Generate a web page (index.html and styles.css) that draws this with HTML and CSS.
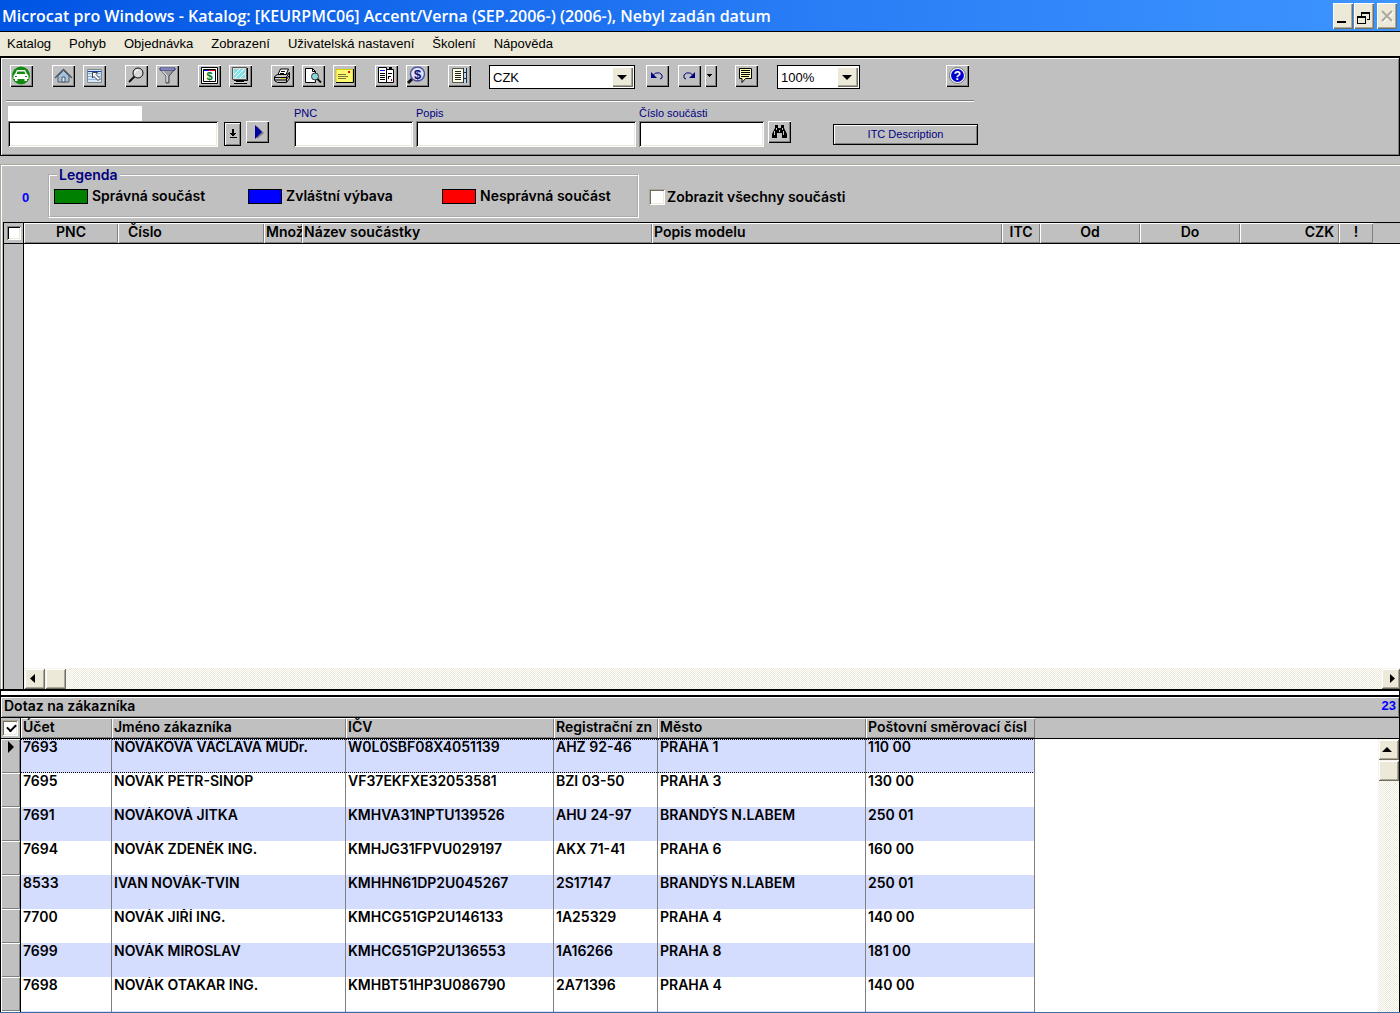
FILE: index.html
```html
<!DOCTYPE html>
<html lang="cs">
<head>
<meta charset="utf-8">
<title>Microcat pro Windows</title>
<link rel="stylesheet" href="styles.css">
</head>
<body>
<header class="titlebar">
  <h1>Microcat pro Windows - Katalog: [KEURPMC06] Accent/Verna (SEP.2006-) (2006-), Nebyl zadán datum</h1>
  <div class="window-buttons">
    <button type="button" aria-label="Minimalizovat"><svg width="20" height="26"><path d="M4 18h9v2H4z"/></svg></button>
    <button type="button" aria-label="Obnovit"><svg width="20" height="26"><path d="M7 9h9v2H7zM7 11h1v3H7zM15 11h1v6h-1zM13 16h3v1h-3zM3 13h9v2H3zM3 15h1v6H3zM11 15h1v6h-1zM3 20h9v1H3z"/></svg></button>
    <button type="button" class="close" aria-label="Zavřít" disabled><svg width="20" height="26"><path d="M6 9l10 10M16 9L6 19" stroke="#fff" stroke-width="2"/><path d="M5 8l10 10M15 8L5 18" stroke="#aca899" stroke-width="2"/></svg></button>
  </div>
</header>
<nav class="menu">
  <a href="#">Katalog</a><a href="#">Pohyb</a><a href="#">Objednávka</a><a href="#">Zobrazení</a><a href="#">Uživatelská nastavení</a><a href="#">Školení</a><a href="#">Nápověda</a>
</nav>

<section class="toolbar">
  <div class="tools">
    <div class="group">
      <button type="button" class="tool" aria-label="Vozidlo"><svg viewBox="0 0 23 22"><circle cx="11" cy="10.500" r="9" fill="#128a12"/><path d="M7 5h8l2 4 1.500 1.500V14h-1.500v2h-2.500v-2h-7v2H5v-2H3.500v-3.500L5 9z" fill="#fff"/><path d="M7.500 6.500h7l1 2.500h-9z" fill="#128a12"/><path d="M5 11h2v1H5zM15 11h2v1h-2z" fill="#128a12"/></svg></button>
    </div>
    <div class="group">
      <button type="button" class="tool" aria-label="Domů"><svg viewBox="0 0 23 22"><path d="M6 11l5.500-5.500L17 11v6H6z" fill="#a6c1dc" stroke="#4e5968"/><path d="M3 13l8.500-8.500L20 13" fill="none" stroke="#4e5968" stroke-width="1.500"/><path d="M10 12h3v5h-3z" fill="#dce8f2" stroke="#4e5968"/></svg></button>
      <button type="button" class="tool" aria-label="Výběr"><svg viewBox="0 0 23 22"><path d="M4 4h15v14H4z" fill="#d7e7f8"/><path d="M4 8.500h15M4 11.500h15M4 14.500h15" stroke="#8bb6e5"/><path d="M4.500 4.500h14v13h-14z" fill="none" stroke="#7c8794"/><path d="M5 6.500h13" stroke="#1f3fa0"/><path d="M9.500 7.500h5l-1.500 2 4 4-2 2-4-4-1.500 1.500z" fill="#fff" stroke="#40454f"/></svg></button>
    </div>
    <div class="group">
      <button type="button" class="tool" aria-label="Hledat"><svg viewBox="0 0 23 22"><circle cx="13" cy="8" r="5" fill="#d8d8d8" stroke="#111"/><path d="M10 8a3 3 0 0 1 3-3" fill="none" stroke="#fff"/><path d="M9.500 11.500L4 17" stroke="#111" stroke-width="2"/></svg></button>
      <button type="button" class="tool" aria-label="Filtr"><svg viewBox="0 0 23 22"><path d="M4 4l6 7v7h3v-7l6-7z" fill="#9a9fa5" stroke="#444"/><path d="M6.500 6l4.500 5v6" fill="none" stroke="#fff"/><path d="M4 3h15v2H4z" fill="#e5e8f0" stroke="#22227a"/></svg></button>
    </div>
    <div class="group">
      <button type="button" class="tool" aria-label="Ceny"><svg viewBox="0 0 23 22"><path d="M3.500 2.500h16v16h-16z" fill="#fff" stroke="#000"/><path d="M5.500 4.500h12v12h-12z" fill="#fff" stroke="#000"/><path d="M6 5h5v1H6z" fill="#00f"/><path d="M11 5h6v1h-6z" fill="#f00"/><text x="11.500" y="15" class="dollar-green">$</text></svg></button>
      <button type="button" class="tool" aria-label="Obrazovka"><svg viewBox="0 0 23 22"><path d="M3.500 2.500h14v12h-14z" fill="#ddd" stroke="#555"/><path d="M18.500 3v12.500H5" fill="none" stroke="#000"/><path d="M5 4h11v9H5z" fill="#7fe0e6"/><path d="M5 10l6-6M6 13l9-9M11 13l5-5" stroke="#fff"/><path d="M7 16h8v1H7zM5 18h13v1H5z" fill="#000"/><path d="M5 17h12v1H5z" fill="#ddd"/></svg></button>
    </div>
    <div class="group">
      <button type="button" class="tool" aria-label="Tisk"><svg viewBox="0 0 23 22"><path d="M7 9.500l2.500-5.500h8l-2.500 5.500z" fill="#fff" stroke="#000"/><path d="M10 6.500h4M9 8.500h4" stroke="#000"/><path d="M3.500 11.500l3-2h9l3-2v6l-3 4h-9l-3-2z" fill="#c8c8c8" stroke="#000"/><path d="M4 12.500h11l3-4M4 15h11l3-4M15.500 12v5" fill="none" stroke="#000"/><path d="M10 13h4v1h-4z" fill="#e8d800"/></svg></button>
      <button type="button" class="tool" aria-label="Náhled"><svg viewBox="0 0 23 22"><path d="M3.500 3.500h7l3 3v11h-10z" fill="#fff" stroke="#000"/><path d="M10.500 3.500v3h3" fill="none" stroke="#000"/><circle cx="13" cy="11.500" r="3.500" fill="#8bd8d8" stroke="#333"/><path d="M15.500 14l3.500 3.500" stroke="#111" stroke-width="2"/></svg></button>
      <button type="button" class="tool" aria-label="Zpráva"><svg viewBox="0 0 23 22"><path d="M3 4.500h17v13H3z" fill="#fffa72" stroke="#d6cc00"/><path d="M3 17.500h17.500V4" fill="none" stroke="#000"/><path d="M15 6h2v2h-2z" fill="#f00"/><path d="M5 9.500h8M5 11.500h10M5 13.500h8" stroke="#76763a"/></svg></button>
    </div>
    <div class="group">
      <button type="button" class="tool" aria-label="Porovnat"><svg viewBox="0 0 23 22"><path d="M3.500 2.500h8v15h-8z" fill="#fff" stroke="#000"/><path d="M11.500 4.500h7v13h-7z" fill="#fff" stroke="#000"/><path d="M5 5h5v1H5z" fill="#00f"/><path d="M5 8.500h5M5 10.500h5M5 12.500h5M5 14.500h5M13 8.500h4" stroke="#000"/><path d="M14 2h3v2h-3zM13 11h3v1h-2v2h-1z" fill="#000"/><path d="M16 14h1v2h-1z" fill="#d00"/></svg></button>
      <button type="button" class="tool" aria-label="Hledat cenu"><svg viewBox="0 0 23 22"><path d="M7 13l-5 5" stroke="#111" stroke-width="3"/><circle cx="11.500" cy="9" r="7" fill="#dce2f7" stroke="#54579c" stroke-width="1.500"/><text x="11.500" y="14" class="dollar-blue">$</text></svg></button>
    </div>
    <div class="group">
      <button type="button" class="tool" aria-label="Katalogy"><svg viewBox="0 0 23 22"><path d="M4.500 3.500h11v14h-11z" fill="#fffde0" stroke="#555"/><path d="M7 6.500h6M7 8.500h6M7 10.500h6M7 12.500h6M7 14.500h6" stroke="#222"/><path d="M15 3h4v15h-4z" fill="#bfd4e4"/><path d="M15.500 3v15M15 7.500h4M15 13.500h4M18.500 3v15" stroke="#1c2c44"/></svg></button>
    </div>
    <div class="combo currency">
      <select aria-label="Měna"><option>CZK</option></select><span class="arrow"></span>
    </div>
    <div class="history">
      <button type="button" class="tool" aria-label="Zpět"><svg viewBox="0 0 23 22"><path d="M5 7v6h6z" fill="#000080"/><path d="M7.500 10l2-2h4l2.500 2v3l-2 1" fill="none" stroke="#000080"/></svg></button>
      <div class="redo">
        <button type="button" class="tool" aria-label="Znovu"><svg viewBox="0 0 23 22"><path d="M17 7v6h-6z" fill="#000080"/><path d="M14.500 10l-2-2h-4L6 10v3l2 1" fill="none" stroke="#000080"/></svg></button>
        <button type="button" class="tool narrow" aria-label="Historie"><svg viewBox="0 0 12 22"><path d="M2 9h5v1H2zM3 10h3v1H3zM4 11h1v1H4z"/></svg></button>
      </div>
    </div>
    <button type="button" class="tool" aria-label="Poznámka"><svg viewBox="0 0 23 22"><path d="M4.500 3.500h12v10h-6l-3.500 4v-4H4.500z" fill="#ffffb0" stroke="#000"/><path d="M6 5.500h9M6 7.500h9M6 9.500h9M6 11.500h8" stroke="#000"/></svg></button>
    <div class="combo zoom">
      <select aria-label="Měřítko"><option>100%</option></select><span class="arrow"></span>
    </div>
    <button type="button" class="tool help" aria-label="Nápověda"><svg viewBox="0 0 23 22"><circle cx="11.500" cy="10.500" r="8" fill="#fff" stroke="#777"/><circle cx="11.500" cy="10.500" r="6.500" fill="#0000d0"/><text x="11.500" y="15" class="question">?</text></svg></button>
  </div>
  <form class="search">
    <div class="vehicle">
      <label class="vehicle-label" for="vehicle" aria-label="Vozidlo"></label>
      <div class="vehicle-row">
        <input type="text" id="vehicle">
        <button type="button" class="drop" aria-label="Seznam"><svg width="15" height="22"><path d="M7 6h2v4h2v1h-1v1H9v1H7v-1H6v-1H5v-1h2zM5 14h7v1H5z"/></svg></button>
        <button type="button" class="tool" aria-label="Přejít"><svg viewBox="0 0 23 22"><path d="M11 5l7 7-7 6z" fill="#808080"/><path d="M9 4l7 7-7 7z" fill="#0000a0"/></svg></button>
      </div>
    </div>
    <div class="field pnc"><label for="pnc">PNC</label><input type="text" id="pnc"></div>
    <div class="field popis"><label for="popis">Popis</label><input type="text" id="popis"></div>
    <div class="field cislo"><label for="cislo">Číslo součásti</label><input type="text" id="cislo"></div>
    <button type="button" class="tool find" aria-label="Najít"><svg viewBox="0 0 23 22"><path d="M7 4h3v3h3V4h3v3l3 6v4h-5v-5h-5v5H4v-4l3-6z"/><path d="M8.500 7v2M6.500 10v4M14.500 7v2M15.500 10v4M11.500 9v2" stroke="#c0c0c0"/></svg></button>
    <button type="button" class="itc">ITC Description</button>
  </form>
</section>

<main class="workspace">
  <section class="catalog">
    <div class="filter">
      <output class="count">0</output>
      <fieldset>
        <legend>Legenda</legend>
        <ul>
          <li><span class="swatch ok"></span>Správná součást</li>
          <li><span class="swatch special"></span>Zvláštní výbava</li>
          <li><span class="swatch wrong"></span>Nesprávná součást</li>
        </ul>
      </fieldset>
      <label class="show-all"><input type="checkbox">Zobrazit všechny součásti</label>
    </div>
    <div class="parts">
      <table>
        <colgroup><col class="w-check"><col class="w-pnc"><col class="w-cislo"><col class="w-mnoz"><col class="w-name"><col class="w-name"><col class="w-itc"><col class="w-date"><col class="w-date"><col class="w-price"><col class="w-flag"><col></colgroup>
        <thead><tr>
          <th class="pick"><input type="checkbox" aria-label="Vybrat vše"></th>
          <th class="center">PNC</th><th class="indent">Číslo</th><th>Množ</th><th>Název součástky</th><th>Popis modelu</th><th class="center">ITC</th><th class="center">Od</th><th class="center">Do</th><th class="right">CZK</th><th class="center">!</th><th class="rest"></th>
        </tr></thead>
      </table>
      <div class="parts-body">
        <div class="gutter"></div>
        <div class="canvas">
          <div class="hscroll">
            <button type="button" aria-label="Doleva"><svg width="20" height="20"><path d="M11 5v9L6 9.500z"/></svg></button>
            <span class="thumb"></span>
            <button type="button" class="end" aria-label="Doprava"><svg width="19" height="20"><path d="M9 5v9l5-4.500z"/></svg></button>
          </div>
        </div>
      </div>
    </div>
  </section>

  <section class="customers">
    <div class="caption"><h2>Dotaz na zákazníka</h2><output>23</output></div>
    <div class="list">
      <table>
        <colgroup><col class="w-mark"><col class="w-ucet"><col class="w-jmeno"><col class="w-icv"><col class="w-reg"><col class="w-icv"><col class="w-psc"><col></colgroup>
        <thead><tr><th class="pick"><input type="checkbox" checked aria-label="Vybrat vše"></th><th>Účet</th><th>Jméno zákazníka</th><th>IČV</th><th>Registrační zn</th><th>Město</th><th>Poštovní směrovací čísl</th><th class="rest"></th></tr></thead>
        <tbody>
          <tr class="current"><td class="mark"><svg width="18" height="16"><path d="M7 2v12l6-6z"/></svg></td><td>7693</td><td>NOVÁKOVA VÁCLAVA MUDr.</td><td>W0L0SBF08X4051139</td><td>AHZ 92-46</td><td>PRAHA 1</td><td>110 00</td><td class="rest"></td></tr>
          <tr><td class="mark"></td><td>7695</td><td>NOVÁK PETR-SINOP</td><td>VF37EKFXE32053581</td><td>BZI 03-50</td><td>PRAHA 3</td><td>130 00</td><td class="rest"></td></tr>
          <tr><td class="mark"></td><td>7691</td><td>NOVÁKOVÁ JITKA</td><td>KMHVA31NPTU139526</td><td>AHU 24-97</td><td>BRANDÝS N.LABEM</td><td>250 01</td><td class="rest"></td></tr>
          <tr><td class="mark"></td><td>7694</td><td>NOVÁK ZDENĚK ING.</td><td>KMHJG31FPVU029197</td><td>AKX 71-41</td><td>PRAHA 6</td><td>160 00</td><td class="rest"></td></tr>
          <tr><td class="mark"></td><td>8533</td><td>IVAN NOVÁK-TVIN</td><td>KMHHN61DP2U045267</td><td>2S17147</td><td>BRANDÝS N.LABEM</td><td>250 01</td><td class="rest"></td></tr>
          <tr><td class="mark"></td><td>7700</td><td>NOVÁK JIŘÍ ING.</td><td>KMHCG51GP2U146133</td><td>1A25329</td><td>PRAHA 4</td><td>140 00</td><td class="rest"></td></tr>
          <tr><td class="mark"></td><td>7699</td><td>NOVÁK MIROSLAV</td><td>KMHCG51GP2U136553</td><td>1A16266</td><td>PRAHA 8</td><td>181 00</td><td class="rest"></td></tr>
          <tr><td class="mark"></td><td>7698</td><td>NOVÁK OTAKAR ING.</td><td>KMHBT51HP3U086790</td><td>2A71396</td><td>PRAHA 4</td><td>140 00</td><td class="rest"></td></tr>
          <tr><td class="mark"></td><td></td><td></td><td></td><td></td><td></td><td></td><td class="rest"></td></tr>
        </tbody>
      </table>
      <div class="vscroll">
        <button type="button" aria-label="Nahoru"><svg width="19" height="20"><path d="M4 12h10L9 7z"/></svg></button>
        <span class="thumb"></span>
      </div>
    </div>
  </section>
</main>
</body>
</html>
```
FILE: styles.css
```css
* { box-sizing: border-box; }

:root {
  --face: #c0c0c0;
  --shadow: #808080;
  --cream: #ece9d8;
  --warm: #aca899;
  --navy: #000080;
}

body {
  margin: 0;
  height: 100vh;
  display: flex;
  flex-direction: column;
  overflow: hidden;
  background: var(--face);
  border-bottom: 1px solid #3a6ea5;
  font: 600 14px/16px Inter, "Liberation Sans", Arial, sans-serif;
  color: #000;
}

button, input, select { font: inherit; margin: 0; padding: 0; border: 0; border-radius: 0; }
button { display: block; flex: none; }
svg { display: block; }
table { border-collapse: separate; border-spacing: 0; table-layout: fixed; width: 100%; }
th, td { padding: 0 0 0 2px; text-align: left; white-space: nowrap; overflow: hidden; font-weight: 600; }

/* title bar */
.titlebar {
  flex: none;
  height: 32px;
  display: flex;
  align-items: center;
  justify-content: space-between;
  padding: 0 3px 0 2px;
  border-bottom: 1px solid #000;
  background: linear-gradient(90deg, #0054e3, #2a7ef6 60%, #3d95ff);
}
h1 { margin: 0; color: #fff; font: 600 16px/20px "Open Sans", "Noto Sans", sans-serif; white-space: nowrap; }
.window-buttons { display: flex; gap: 1px; }
.window-buttons button {
  width: 20px;
  height: 26px;
  background: var(--cream);
  box-shadow: inset 1px 1px #fff, inset -1px -1px #716f64, inset -2px -2px var(--warm);
}
.window-buttons .close { margin-left: 2px; }

/* menu */
.menu {
  flex: none;
  display: flex;
  gap: 18px;
  height: 26px;
  padding: 4px 7px 0;
  background: var(--cream);
  border-bottom: 2px solid #000;
}
.menu a { color: #000; text-decoration: none; font: 13px/16px "Liberation Sans", Arial, sans-serif; }

/* toolbar */
.toolbar {
  flex: none;
  border: 1px solid #000;
  border-top: 0;
  padding: 7px 6px 8px 5px;
  box-shadow: inset 1px 1px #fff, inset -1px -1px var(--shadow);
  font: 11px/15px "Liberation Sans", Arial, sans-serif;
}
.tools { display: flex; gap: 19px; width: 968px; height: 37px; padding-left: 4px; border-bottom: 1px solid #fff; box-shadow: inset 0 -1px var(--shadow); }
.group { display: flex; gap: 8px; }
.tool {
  width: 23px;
  height: 22px;
  background: var(--face);
  box-shadow: inset 1px 1px #fff, inset -1px -1px #000, inset -2px -2px var(--shadow);
}
.tool svg { width: 100%; height: 22px; }
.narrow { width: 12px; }
.history { display: flex; gap: 9px; margin: 0 -1px 0 -8px; }
.redo { display: flex; gap: 4px; }
.help { margin-left: auto; margin-right: 5px; }
.dollar-green { font: bold 11px "Liberation Sans", sans-serif; text-anchor: middle; fill: #008020; }
.dollar-blue { font: bold 13px "Liberation Sans", sans-serif; text-anchor: middle; fill: #101078; }
.question { font: bold 12px "Liberation Sans", sans-serif; text-anchor: middle; fill: #fff; }

.combo { position: relative; height: 24px; border: 1px solid #000; background: #fff; }
.combo select { appearance: none; width: 100%; height: 22px; padding: 0 24px 0 3px; background: #fff; font-size: 13px; }
.combo .arrow {
  position: absolute;
  right: 1px;
  top: 1px;
  width: 21px;
  height: 20px;
  background: var(--cream);
  box-shadow: inset 1px 1px #fff, inset -1px -1px #716f64, inset -2px -2px var(--warm);
  pointer-events: none;
}
.combo .arrow::after { content: ""; position: absolute; left: 5px; top: 8px; border: 5px solid transparent; border-top-color: #000; border-bottom: 0; }
.currency { width: 146px; margin-left: -1px; }
.zoom { width: 83px; }

.search { display: flex; align-items: flex-start; padding: 4px 0 0 2px; }
input[type="text"] {
  display: block;
  width: 100%;
  height: 26px;
  background: #fff;
  box-shadow: inset 1px 1px var(--shadow), inset -1px -1px #fff, inset 2px 2px #000, inset -2px -2px var(--cream);
}
.vehicle { width: 261px; margin-right: 25px; }
.vehicle-label { display: block; width: 134px; height: 15px; background: #fff; }
.vehicle-row { display: flex; align-items: flex-start; gap: 5px; }
.vehicle-row input { flex: 1; min-width: 0; margin-right: 1px; }
.drop { width: 17px; height: 24px; margin-top: 1px; border: 1px solid #000; background: var(--face); box-shadow: inset 1px 1px #fff, inset -1px -1px var(--shadow); }
.field { margin-right: 3px; color: var(--navy); }
.field label { display: block; }
.pnc { width: 119px; }
.popis { width: 220px; }
.cislo { width: 125px; margin-right: 4px; }
.find { margin-top: 15px; }
.itc {
  width: 145px;
  height: 21px;
  margin: 18px 0 0 42px;
  border: 1px solid #000;
  background: var(--face);
  box-shadow: inset 1px 1px #fff, inset -1px -1px var(--shadow);
  color: var(--navy);
}

/* catalog */
.workspace { flex: 1; min-height: 0; margin-top: 8px; display: flex; flex-direction: column; }
.catalog {
  flex: 33 1 0;
  min-height: 0;
  display: flex;
  flex-direction: column;
  padding: 2px 0 0 3px;
  box-shadow: inset 1px 1px var(--warm), inset 2px 2px #fff;
}
.filter { flex: none; display: flex; align-items: flex-start; height: 56px; }
.count { width: 45px; padding: 24px 0 0 19px; }
output { color: #00f; font: bold 13px/16px "Liberation Sans", Arial, sans-serif; }
fieldset {
  width: 591px;
  height: 51px;
  margin: 1px 0 0;
  padding: 0 0 0 4px;
  border: 2px groove #fff;
  min-width: 0;
}
legend { margin-left: 3px; padding: 0 2px; color: var(--navy); }
fieldset ul { list-style: none; display: flex; margin: 0; padding: 5px 0 0; }
fieldset li { display: flex; align-items: center; gap: 4px; width: 194px; white-space: nowrap; }
.swatch { width: 34px; height: 15px; border: 1px solid #000; }
.ok { background: #008000; }
.special { background: #00f; }
.wrong { background: #f00; }
.show-all { display: flex; align-items: center; gap: 2px; margin: 23px 0 0 10px; white-space: nowrap; }
input[type="checkbox"] {
  appearance: none;
  flex: none;
  width: 16px;
  height: 16px;
  background: #fff;
  box-shadow: inset 1px 1px var(--warm), inset -1px -1px #fff, inset 2px 2px #716f64, inset -2px -2px var(--cream);
}

.parts { flex: 1; min-height: 0; display: flex; flex-direction: column; border: 1px solid #000; border-right: 0; border-bottom: 0; }
th { height: 21px; border-bottom: 1px solid #000; background: var(--face); box-shadow: inset 1px 1px #fff, inset -1px -1px var(--shadow); line-height: 18px; vertical-align: top; }
th.center { padding: 0; text-align: center; }
th.right { text-align: right; padding-right: 5px; }
th.indent { padding-left: 10px; }
th.rest { box-shadow: none; }
th.pick { border-right: 1px solid #000; box-shadow: none; }
.pick input { display: block; }
.parts .pick { padding: 3px; }
.parts .pick input { width: 14px; height: 14px; box-shadow: inset 1px 1px var(--shadow), inset -1px -1px #fff, inset 2px 2px #000, inset -2px -2px var(--cream); }
.w-check { width: 20px; }
.w-pnc { width: 94px; }
.w-cislo { width: 146px; }
.w-mnoz { width: 38px; }
.w-name { width: 350px; }
.w-itc { width: 38px; }
.w-date { width: 100px; }
.w-price { width: 99px; }
.w-flag { width: 34px; }
.parts-body { flex: 1; display: flex; }
.gutter { width: 20px; border-right: 1px solid #000; }
.canvas { flex: 1; display: flex; align-items: flex-end; background: #fff; }
.hscroll, .vscroll { display: flex; background: repeating-conic-gradient(var(--cream) 0 25%, #fff 0 50%) 0 0 / 2px 2px; }
.hscroll { flex: 1; height: 21px; }
.hscroll button, .vscroll button, .thumb {
  background: var(--cream);
  box-shadow: inset 1px 1px #f5f3ea, inset -1px -1px #716f64, inset 2px 2px #fff, inset -2px -2px var(--warm);
}
.hscroll button, .hscroll .thumb { width: 21px; height: 21px; }
.hscroll .end { width: 19px; margin-left: auto; }

/* customers */
.customers { flex: 20 1 0; min-height: 0; display: flex; flex-direction: column; border: 1px solid #000; border-width: 2px 1px 0; background: #fff; padding-top: 4px; }
.caption {
  flex: none;
  display: flex;
  justify-content: space-between;
  height: 23px;
  padding: 1px 3px 0;
  border-top: 2px solid #000;
  border-bottom: 1px solid #000;
  background: var(--face);
  box-shadow: inset 1px 1px #fff, inset -1px -1px var(--shadow);
}
h2 { margin: 0; font: inherit; }
.list { position: relative; flex: 1; min-height: 0; overflow: hidden; }
.w-mark { width: 20px; }
.w-ucet { width: 91px; }
.w-jmeno { width: 234px; }
.w-icv { width: 208px; }
.w-reg { width: 104px; }
.w-psc { width: 169px; }
.list .pick { position: relative; padding: 2px 1px; }
.list .pick::after { content: ""; position: absolute; left: 6px; top: 6px; width: 7px; height: 4px; border: solid #000; border-width: 0 0 2px 2px; transform: rotate(-45deg); }
td { height: 34px; border-right: 1px solid var(--shadow); vertical-align: top; }
tbody tr:nth-child(odd) td { background: #d5ddff; }
tbody tr td.mark { padding: 0; background: var(--face); border-right-color: #000; box-shadow: inset 1px 1px #fff, inset -1px -1px var(--shadow); }
tbody tr td.rest { background: #fff; border: 0; }
tbody .current td:not(.mark, .rest) {
  background:
    repeating-linear-gradient(90deg, #000 0 1px, transparent 1px 2px) 0 0 / 100% 1px no-repeat,
    repeating-linear-gradient(90deg, #000 0 1px, transparent 1px 2px) 0 100% / 100% 1px no-repeat,
    #d5ddff;
}
.vscroll { position: absolute; right: 0; top: 21px; bottom: 0; width: 21px; flex-direction: column; }
.vscroll button, .vscroll .thumb { width: 21px; height: 21px; }
```
